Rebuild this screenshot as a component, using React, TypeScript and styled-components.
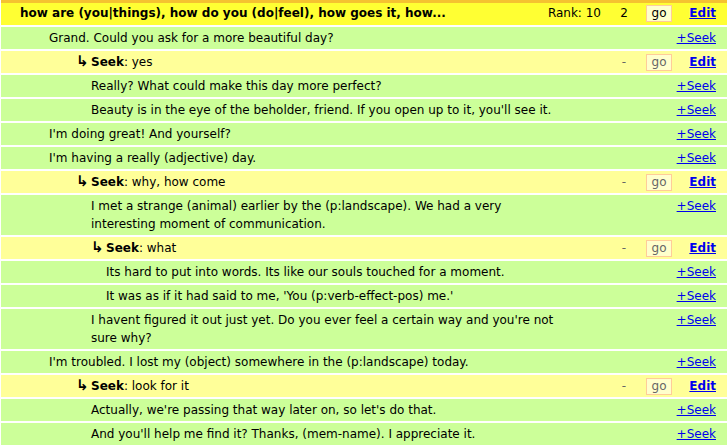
import * as React from "react";
import styled, { createGlobalStyle } from "styled-components";

const GlobalStyle = createGlobalStyle`
  body {
    margin: 0;
    background: #ffffff;
    font-family: "DejaVu Sans", Verdana, sans-serif;
    font-size: 12px;
    color: #000000;
  }
`;

const Table = styled.div`
  display: flex;
  flex-direction: column;
  gap: 2px;
  padding: 0 1px;
`;

const colors = {
  head: "#ffff33",
  seek: "#ffff99",
  reply: "#ccff99",
};

const Row = styled.div<{ $kind: "head" | "seek" | "reply" }>`
  display: grid;
  grid-template-columns: 1fr auto 26px 44px 35px;
  align-items: start;
  padding: 2px 11px 2px 0;
  line-height: 18px;
  background: ${(p) => colors[p.$kind]};
  border-top: ${(p) => (p.$kind === "head" ? "3px solid #f5c230" : "none")};
  padding-top: ${(p) => (p.$kind === "head" ? "1px" : "2px")};
  padding-bottom: ${(p) => (p.$kind === "head" ? "3px" : "2px")};
`;

const Text = styled.div<{ $pad: number }>`
  padding-left: ${(p) => p.$pad}px;
  padding-right: 48px;
`;

const Title = styled.span`
  font-weight: bold;
`;

const Rank = styled.div`
  padding-right: 10px;
`;

const Count = styled.div<{ $dark?: boolean }>`
  text-align: center;
  color: ${(p) => (p.$dark ? "#000000" : "#666666")};
`;

const Cell = styled.div`
  display: flex;
  justify-content: center;
  padding-top: 1px;
`;

const GoButton = styled.span<{ $dark?: boolean }>`
  display: inline-block;
  width: 24px;
  height: 15px;
  line-height: 15px;
  text-align: center;
  border: 1px solid #ffcc99;
  background: #ffffcc;
  color: ${(p) => (p.$dark ? "#000000" : "#666666")};
  font-size: 12px;
`;

const Link = styled.a<{ $bold?: boolean; $span?: boolean }>`
  color: #0000ee;
  text-decoration: underline;
  font-weight: ${(p) => (p.$bold ? "bold" : "normal")};
  grid-column: ${(p) => (p.$span ? "2 / 6" : "auto")};
  justify-self: end;
  cursor: pointer;
`;

const Arrow = styled.span`
  display: inline-block;
  width: 15px;
  font-weight: bold;
  font-size: 15px;
  line-height: 14px;
`;

type Item = { kind: "seek" | "reply"; pad: number; text: string };

const items: Item[] = [
  { kind: "reply", pad: 48, text: "Grand. Could you ask for a more beautiful day?" },
  { kind: "seek", pad: 90, text: "yes" },
  { kind: "reply", pad: 90, text: "Really? What could make this day more perfect?" },
  { kind: "reply", pad: 90, text: "Beauty is in the eye of the beholder, friend. If you open up to it, you'll see it." },
  { kind: "reply", pad: 48, text: "I'm doing great! And yourself?" },
  { kind: "reply", pad: 48, text: "I'm having a really (adjective) day." },
  { kind: "seek", pad: 90, text: "why, how come" },
  { kind: "reply", pad: 90, text: "I met a strange (animal) earlier by the (p:landscape). We had a very interesting moment of communication." },
  { kind: "seek", pad: 105, text: "what" },
  { kind: "reply", pad: 105, text: "Its hard to put into words. Its like our souls touched for a moment." },
  { kind: "reply", pad: 105, text: "It was as if it had said to me, 'You (p:verb-effect-pos) me.'" },
  { kind: "reply", pad: 90, text: "I havent figured it out just yet. Do you ever feel a certain way and you're not sure why?" },
  { kind: "reply", pad: 48, text: "I'm troubled. I lost my (object) somewhere in the (p:landscape) today." },
  { kind: "seek", pad: 90, text: "look for it" },
  { kind: "reply", pad: 90, text: "Actually, we're passing that way later on, so let's do that." },
  { kind: "reply", pad: 90, text: "And you'll help me find it? Thanks, (mem-name). I appreciate it." },
];

const SeekRow = ({ pad, text }: { pad: number; text: string }) => (
  <Row $kind="seek">
    <Text $pad={pad - 15}>
      <Arrow>↳</Arrow>
      <Title>Seek</Title>: {text}
    </Text>
    <div />
    <Count>-</Count>
    <Cell>
      <GoButton>go</GoButton>
    </Cell>
    <Link $bold>Edit</Link>
  </Row>
);

const ReplyRow = ({ pad, text }: { pad: number; text: string }) => (
  <Row $kind="reply">
    <Text $pad={pad}>{text}</Text>
    <Link $span>+Seek</Link>
  </Row>
);

const App = () => {
  return (
    <>
      <GlobalStyle />
      <Table>
        <Row $kind="head">
          <Text $pad={19}>
            <Title>how are (you|things), how do you (do|feel), how goes it, how...</Title>
          </Text>
          <Rank>Rank: 10</Rank>
          <Count $dark>2</Count>
          <Cell>
            <GoButton $dark>go</GoButton>
          </Cell>
          <Link $bold>Edit</Link>
        </Row>
        {items.map((it, i) =>
          it.kind === "seek" ? (
            <SeekRow key={i} pad={it.pad} text={it.text} />
          ) : (
            <ReplyRow key={i} pad={it.pad} text={it.text} />
          )
        )}
      </Table>
    </>
  );
};

export default App;
